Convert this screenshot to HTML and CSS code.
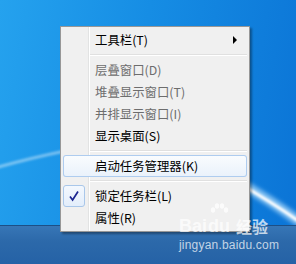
FILE: index.html
```html
<!DOCTYPE html>
<html lang="zh">

<head>
	<meta charset="UTF-8" />
	<title>任务栏菜单</title>
	<link rel="stylesheet" href="styles.css">
</head>

<body>
	<div id="desktop">
		<div class="wall">
			<svg class="streaks" width="296" height="225" viewBox="0 0 296 225">
				<defs>
					<filter id="blur2"><feGaussianBlur stdDeviation="2" /></filter>
					<filter id="blur1"><feGaussianBlur stdDeviation="0.8" /></filter>
				</defs>
				<path d="M-5 168 Q30 158 70 150" stroke="#ffffff" stroke-opacity="0.4" stroke-width="3" fill="none" filter="url(#blur1)" />
				<path d="M238 182 Q270 200 300 222" stroke="#bfe6ff" stroke-opacity="0.7" stroke-width="10" fill="none" filter="url(#blur2)" />
				<path d="M240 184 Q270 201 300 222" stroke="#ffffff" stroke-width="3" fill="none" filter="url(#blur1)" />
			</svg>

			<div class="menu">
				<div class="item">
					<span class="icon"></span>
					<span class="label">工具栏(T)</span>
					<span class="arrow"></span>
				</div>
				<div class="sep"></div>
				<div class="item off"><span class="icon"></span><span class="label">层叠窗口(D)</span></div>
				<div class="item off"><span class="icon"></span><span class="label">堆叠显示窗口(T)</span></div>
				<div class="item off"><span class="icon"></span><span class="label">并排显示窗口(I)</span></div>
				<div class="item"><span class="icon"></span><span class="label">显示桌面(S)</span></div>
				<div class="sep"></div>
				<div class="item hot"><span class="icon"></span><span class="label">启动任务管理器(K)</span></div>
				<div class="sep"></div>
				<div class="item">
					<span class="icon checked">
						<svg width="20" height="20" viewBox="0 0 20 20">
							<path d="M6 10.5 L8.6 14 L14 5.5" stroke="#1c2590" stroke-width="1.7" fill="none" />
						</svg>
					</span>
					<span class="label">锁定任务栏(L)</span>
				</div>
				<div class="item"><span class="icon"></span><span class="label">属性(R)</span></div>
			</div>
		</div>
		<div class="taskbar"></div>

		<div class="mark">
			<div class="logo">
				<span class="bai">Bai</span>
				<span class="du">
					<svg class="paw" width="22" height="14" viewBox="0 0 22 14">
						<ellipse cx="5" cy="7" rx="2.2" ry="2.8" />
						<ellipse cx="9" cy="3" rx="2.2" ry="2.8" />
						<ellipse cx="14" cy="3" rx="2.2" ry="2.8" />
						<ellipse cx="18" cy="7" rx="2.2" ry="2.8" />
					</svg>
					du
				</span>
				<span class="jy">经验</span>
			</div>
			<div class="url">jingyan.baidu.com</div>
		</div>
	</div>
</body>

</html>
```

FILE: styles.css
```css
* {
	padding: 0px;
	margin: 0px;
	box-sizing: border-box;
}

body {
	width: 296px;
	height: 264px;
	overflow: hidden;
	font-family: "Noto Sans CJK SC", "Liberation Sans", sans-serif;
	font-size: 12.4px;
}

#desktop {
	width: 296px;
	height: 264px;
	display: flex;
	flex-direction: column;
	position: relative;
}

.wall {
	flex: 1;
	position: relative;
	background: linear-gradient(100deg, #25a2ee 0%, #168de4 45%, #0b74d6 100%);
}

.streaks {
	position: absolute;
	left: 0;
	top: 0;
}

.taskbar {
	height: 39px;
	border-top: 1px solid #1d4f86;
	background: linear-gradient(to bottom, #3776b6 0%, #2c69aa 40%, #2562a6 100%);
}

/* context menu */
.menu {
	position: absolute;
	left: 60px;
	top: 26px;
	width: 190px;
	padding: 2px 0;
	border: 1px solid #979797;
	background: linear-gradient(to right, #f0f0f0 27px, #e2e3e3 27px, #e2e3e3 28px, #ffffff 28px, #ffffff 29px, #f0f0f0 29px);
	box-shadow: 2px 2px 2px rgba(0, 0, 0, 0.35);
}

.item {
	display: flex;
	align-items: center;
	height: 22px;
	margin: 0 2px;
	border-radius: 3px;
	color: #000;
}

.item.off {
	color: #6d6d6d;
}

.item.hot {
	box-shadow: inset 0 0 0 1px #aeccef;
	background: linear-gradient(to bottom, #fafcfe, #e9f1fb);
}

.icon {
	width: 22px;
	height: 22px;
	display: flex;
	align-items: center;
	justify-content: center;
}

.icon.checked {
	border: 1px solid #a9c7ea;
	border-radius: 3px;
	background: linear-gradient(to bottom, #f3f8fe, #e3eefb);
}

.label {
	padding-left: 10px;
	line-height: 22px;
	white-space: nowrap;
}

.arrow {
	margin-left: auto;
	margin-right: 10px;
	width: 0;
	height: 0;
	border-left: 4px solid #000;
	border-top: 4px solid transparent;
	border-bottom: 4px solid transparent;
}

.sep {
	height: 8px;
	margin: 0 2px 0 29px;
	padding-top: 3px;
}

.sep::before {
	content: "";
	display: block;
	border-top: 1px solid #e0e0e0;
	border-bottom: 1px solid #ffffff;
}

/* watermark */
.mark {
	position: absolute;
	left: 179px;
	top: 206px;
	color: rgba(255, 255, 255, 0.72);
}

.logo {
	display: flex;
	align-items: flex-end;
	height: 30px;
	font-family: "Liberation Sans", sans-serif;
	font-weight: bold;
	font-size: 18px;
	line-height: 20px;
}

.du {
	position: relative;
	margin-left: 1px;
}

.paw {
	position: absolute;
	left: 0;
	top: -13px;
	fill: rgba(255, 255, 255, 0.72);
}

.jy {
	margin-left: 6px;
	font-family: "Noto Sans CJK SC", sans-serif;
	font-size: 16px;
	line-height: 20px;
}

.url {
	margin-top: 2px;
	font-family: "Liberation Sans", sans-serif;
	font-size: 12px;
	letter-spacing: 0.2px;
}
```
